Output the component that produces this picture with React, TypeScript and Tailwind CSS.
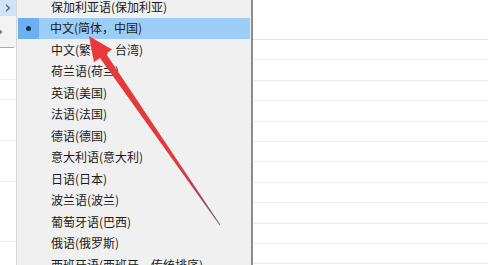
import React from "react";

const items = [
  "保加利亚语(保加利亚)",
  "中文(简体，中国)",
  "中文(繁体，台湾)",
  "荷兰语(荷兰)",
  "英语(美国)",
  "法语(法国)",
  "德语(德国)",
  "意大利语(意大利)",
  "日语(日本)",
  "波兰语(波兰)",
  "葡萄牙语(巴西)",
  "俄语(俄罗斯)",
  "西班牙语(西班牙，传统排序)",
];

function Chevron({ className }: { className?: string }) {
  return (
    <svg width="6" height="8" viewBox="0 0 6 8" className={className}>
      <path d="M1 1 L4.5 4 L1 7" fill="none" stroke="#4a6a8a" strokeWidth="1.3" />
    </svg>
  );
}

export default function App() {
  const font = { fontFamily: '"Noto Sans CJK SC", "Noto Sans", sans-serif' };
  return (
    <div className="relative w-[488px] h-[265px] overflow-hidden bg-white flex" style={font}>
      {/* left sliver of parent menu */}
      <div className="w-[16px] shrink-0 flex flex-col">
        <div className="h-[16px] bg-[#cfe5f7] flex items-center pl-[5px]">
          <Chevron />
        </div>
        <div className="h-[31px] bg-[#f3f3f3] flex items-center -ml-[3px]">
          <Chevron />
        </div>
        <div className="h-[1px] bg-[#a8a8a8] mr-[2px]" />
        <div className="flex-1 flex flex-col">
          <div className="h-[32px] border-b border-[#f0f0f0]" />
          <div className="h-[20px] border-b border-[#f0f0f0]" />
          <div className="h-[41px] border-b border-[#f0f0f0]" />
          <div className="h-[41px] border-b border-[#f0f0f0]" />
          <div className="h-[60px] border-b border-[#f0f0f0]" />
        </div>
      </div>

      {/* menu */}
      <div className="w-[237px] shrink-0 bg-[#f0f0f0] border-l border-[#d6d6d6] border-r-2 border-r-[#8c8c8c]">
        <div className="-mt-[4px] flex flex-col">
          {items.map((t, i) => {
            const active = i === 1;
            return (
              <div key={t} className="h-[21.5px] flex items-center">
                {active ? (
                  <div className="ml-[1px] mr-[1px] flex-1 h-full flex items-center bg-[#9ccdf6]">
                    <div className="w-[21px] h-full bg-[#6cb0f0] flex items-center justify-center">
                      <div className="w-[5px] h-[5px] rounded-full bg-[#15304f]" />
                    </div>
                    <span className="ml-[11px] text-[12px] leading-none text-[#1a1a1a] whitespace-nowrap">{t}</span>
                  </div>
                ) : (
                  <span className="ml-[34px] text-[12px] leading-none text-[#1a1a1a] whitespace-nowrap">{t}</span>
                )}
              </div>
            );
          })}
        </div>
      </div>

      {/* right content */}
      <div className="flex-1 flex flex-col">
        <div className="h-[40px] shrink-0 border-b border-[#e6e6e6]" />
        {Array.from({ length: 12 }).map((_, i) => (
          <div key={i} className="h-[20.4px] shrink-0 border-b border-[#ebebeb]" />
        ))}
      </div>

      {/* red arrow annotation */}
      <svg className="absolute inset-0 pointer-events-none" width="488" height="265" viewBox="0 0 488 265">
        <defs>
          <linearGradient id="shaft" gradientUnits="userSpaceOnUse" x1="100" y1="55" x2="220" y2="225">
            <stop offset="0" stopColor="#e8393b" />
            <stop offset="0.65" stopColor="#e03a3e" />
            <stop offset="0.85" stopColor="#9c4a5e" />
            <stop offset="1" stopColor="#7a6a7a" />
          </linearGradient>
        </defs>
        <polygon points="105.9,53.6 99.8,57.8 219.6,225.3 220.4,224.7" fill="url(#shaft)" />
        <polygon points="89,36 112,49.4 94,62.2" fill="#e8393b" />
      </svg>
    </div>
  );
}
